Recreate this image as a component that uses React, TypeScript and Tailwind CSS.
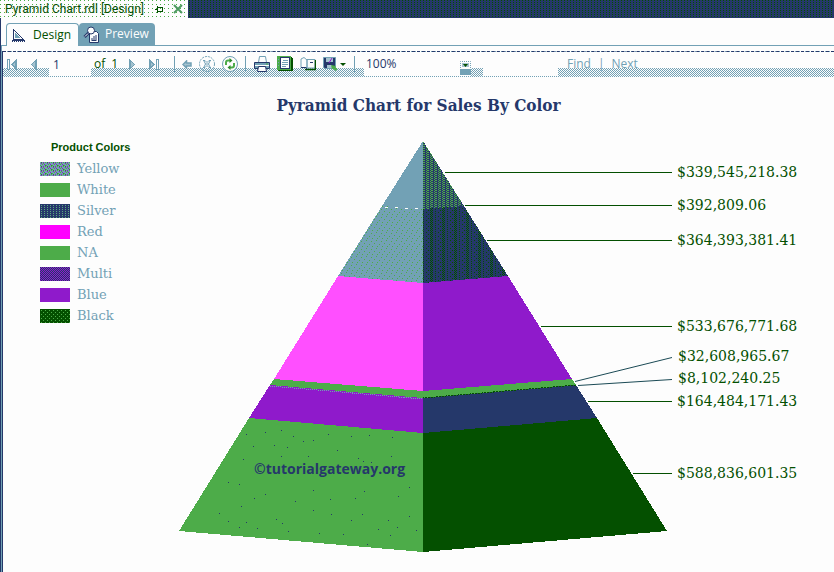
import React from "react";

type LegendEntry = { name: string; fill: string };

const legend: LegendEntry[] = [
  { name: "Yellow", fill: "url(#legendYellow)" },
  { name: "White", fill: "#4dac49" },
  { name: "Silver", fill: "url(#legendSilver)" },
  { name: "Red", fill: "#ff00ff" },
  { name: "NA", fill: "#4dac49" },
  { name: "Multi", fill: "url(#legendMulti)" },
  { name: "Blue", fill: "#8f1acb" },
  { name: "Black", fill: "url(#legendBlack)" },
];

type Callout = { value: string; from: [number, number]; to: number; text: [number, number] };

const callouts: Callout[] = [
  { value: "$339,545,218.38", from: [445, 172], to: 172, text: [677, 177] },
  { value: "$392,809.06", from: [465, 205], to: 205, text: [677, 210] },
  { value: "$364,393,381.41", from: [487, 240], to: 240, text: [677, 245] },
  { value: "$533,676,771.68", from: [541, 326], to: 326, text: [677, 331] },
  { value: "$32,608,965.67", from: [575, 381], to: 357, text: [678, 361] },
  { value: "$8,102,240.25", from: [578, 385], to: 379, text: [678, 383] },
  { value: "$164,484,171.43", from: [588, 401], to: 401, text: [677, 406] },
  { value: "$588,836,601.35", from: [633, 473], to: 473, text: [677, 478] },
];

const specks: [number, number][] = [
  [246, 434], [265, 432], [281, 430], [293, 436], [253, 446], [274, 445], [287, 447], [303, 441],
  [313, 440], [328, 434], [351, 436], [369, 435], [392, 437], [243, 459], [281, 456], [308, 456],
  [337, 450], [358, 458], [363, 461], [371, 462], [391, 456], [228, 482], [239, 484], [254, 498],
  [265, 494], [313, 490], [295, 501], [241, 506], [219, 513], [228, 521], [246, 522], [239, 527],
  [257, 528], [276, 519], [282, 523], [288, 531], [313, 510], [330, 499], [331, 514], [355, 498],
  [364, 491], [351, 520], [362, 514], [398, 496], [409, 487], [388, 520], [409, 516], [397, 527],
  [378, 529], [390, 535], [416, 530], [319, 533], [343, 534], [367, 544],
];

function Separator() {
  return <span className="h-4 w-px bg-[#72a1b5]" />;
}

function ToolButton({ label, children }: { label: string; children: React.ReactNode }) {
  return (
    <button type="button" aria-label={label} className="flex h-6 items-center">
      {children}
    </button>
  );
}

function Tabs() {
  return (
    <div className="flex h-7 items-end border-b border-[#72a1b5] pl-[5px]">
      <button
        type="button"
        className="-mb-px flex h-[23px] w-[73px] items-center gap-2 rounded-t-sm border border-b-0 border-[#72a1b5] bg-[#fdfdfd] pl-[5px] text-[12px] leading-4 text-[#045000]"
      >
        <svg width="13" height="15" viewBox="0 0 13 15" shapeRendering="crispEdges">
          <path d="M1 1v10h10z" fill="#fdfdfd" stroke="#25386a" />
          <path d="M3.5 6v3.5H7z" fill="#72a1b5" stroke="#72a1b5" />
          <path d="M0 12.5h13" stroke="#25386a" />
          <path d="M0 13.5h13" stroke="#25386a" strokeDasharray="1 1" />
        </svg>
        Design
      </button>
      <button
        type="button"
        className="flex h-[22px] w-[76px] items-center gap-[6px] rounded-t-sm bg-[#72a1b5] pl-1 text-[12px] leading-4 text-[#fdfdfd]"
      >
        <svg width="16" height="17" viewBox="0 0 16 17">
          <path d="M6.500 5.500h7l2 2v9h-9z" fill="#fdfdfd" stroke="#25386a" />
          <path d="M9 14v-2M11 14v-4M13 14v-5" stroke="#25386a" />
          <path d="M8.500 14.500h5" stroke="#25386a" />
          <circle cx="8" cy="4.500" r="3.500" fill="#fdfdfd" stroke="#25386a" />
          <path d="M5.500 7L1.500 11" stroke="#25386a" strokeWidth="3" />
          <path d="M5 7.500L2 10.500" stroke="#fdfdfd" />
        </svg>
        Preview
      </button>
    </div>
  );
}

function Toolbar() {
  return (
    <div className="flex h-[26px] items-start border-t border-dashed border-[#25386a] bg-[linear-gradient(#fdfdfd_16px,transparent_16px),conic-gradient(#72a1b5_25%,#fdfdfd_0_50%,#72a1b5_0_75%,#fdfdfd_0)] [background-size:auto,2px_2px] pl-1 text-[12px] text-[#25386a]">
      <div className="flex w-[42px] items-center gap-3">
        <ToolButton label="First page">
          <svg width="11" height="11" viewBox="0 0 11 11" fill="#a5c3d0" stroke="#72a1b5" shapeRendering="crispEdges">
            <path d="M.5.5h2v10h-2z" fill="#fdfdfd" />
            <path d="M9.500 1v9L5 5.500z" />
            <path d="M8.500 3v5" />
          </svg>
        </ToolButton>
        <ToolButton label="Previous page">
          <svg width="8" height="11" viewBox="0 0 8 11" fill="#a5c3d0" stroke="#72a1b5" shapeRendering="crispEdges">
            <path d="M6.500 1v9L1.500 5.500z" />
            <path d="M5.500 3v5" />
          </svg>
        </ToolButton>
      </div>
      <input
        aria-label="Current page"
        defaultValue="1"
        className="h-6 w-[42px] bg-[#fdfdfd] pl-1 text-[12px] outline-none"
      />
      <div className="flex w-[92px] items-center">
        <span className="flex h-6 w-[34px] items-center gap-[6px] pl-[3px] text-[#045000]">
          of <span>1</span>
        </span>
        <div className="ml-[3px] flex gap-3">
          <ToolButton label="Next page">
            <svg width="8" height="11" viewBox="0 0 8 11" fill="#a5c3d0" stroke="#72a1b5" shapeRendering="crispEdges">
              <path d="M1.500 1v9l5-4.500z" />
              <path d="M2.500 3v5" />
            </svg>
          </ToolButton>
          <ToolButton label="Last page">
            <svg width="11" height="11" viewBox="0 0 11 11" fill="#a5c3d0" stroke="#72a1b5" shapeRendering="crispEdges">
              <path d="M8.500.5h2v10h-2z" fill="#fdfdfd" />
              <path d="M1.500 1v9L6 5.500z" />
              <path d="M2.500 3v5" />
            </svg>
          </ToolButton>
        </div>
      </div>
      <div className="-ml-[9px] flex h-6 w-[190px] items-center justify-between pr-[9px]">
        <Separator />
        <ToolButton label="Back">
          <svg width="10" height="9" viewBox="0 0 10 9" fill="#a5c3d0" stroke="#72a1b5" strokeWidth="1.500">
            <path d="M4.500 1L1 4.500 4.500 8V6H9V3H4.500z" />
          </svg>
        </ToolButton>
        <ToolButton label="Stop">
          <svg width="16" height="16" viewBox="0 0 16 16" fill="none" stroke="#72a1b5">
            <circle cx="8" cy="8" r="7.500" strokeDasharray="2 1" />
            <path d="M4 4.500h2l2 2 2-2h2M4 11.500h2l2-2 2 2h2M5 5l1.500 3L5 11M11 5L9.500 8l1.500 3M6.500 8h3" />
          </svg>
        </ToolButton>
        <ToolButton label="Refresh">
          <svg width="16" height="16" viewBox="0 0 16 16">
            <circle cx="8" cy="8" r="7.500" fill="#fdfdfd" stroke="#72a1b5" />
            <path d="M4 9V6.500Q4 4.500 6 4.500h2M12 7v2.500q0 2-2 2H8" fill="none" stroke="#4dac49" strokeWidth="2" />
            <path d="M7.500 2l3 2.500-3 2.500zM8.500 9l-3 2.500 3 2.500z" fill="#2f8a2c" />
          </svg>
        </ToolButton>
        <Separator />
        <ToolButton label="Print">
          <svg width="16" height="16" viewBox="0 0 16 16">
            <path d="M4.500 6.500l1-6h6l1 6z" fill="#fdfdfd" stroke="#72a1b5" />
            <path d="M.5 6.500h15v6H.5z" fill="#72a1b5" stroke="#25386a" />
            <path d="M1 9.500h14" stroke="#fdfdfd" />
            <path d="M4.500 10.500h7l1 5h-9z" fill="#fdfdfd" stroke="#25386a" />
            <path d="M12 8h2" stroke="#4dac49" />
          </svg>
        </ToolButton>
        <ToolButton label="Print layout">
          <svg width="16" height="16" viewBox="0 0 16 16" shapeRendering="crispEdges">
            <path d="M1 1h13l2 2v12H1z" fill="#045000" />
            <path d="M0 0h14v14H0z" fill="#4dac49" />
            <path d="M3.500 1.500h9v11h-9z" fill="#fdfdfd" stroke="#25386a" />
            <path d="M6 4.500h5M5 6.500h6M5 8.500h6M5 10.500h4M1 3.500h1M1 6.500h1M1 9.500h1" stroke="#72a1b5" />
          </svg>
        </ToolButton>
        <ToolButton label="Page setup">
          <svg width="16" height="14" viewBox="0 0 16 14">
            <path d="M1 10.500V2l3-1.500L7 3v7.500zM7 10.500V2.500h8v8.500H7z" fill="#fdfdfd" stroke="#72a1b5" />
            <path d="M5 12.500h10.500V3" fill="none" stroke="#045000" strokeWidth="1.500" />
            <path d="M1 10.500h5l1 2M10 5.500h3" fill="none" stroke="#25386a" />
          </svg>
        </ToolButton>
        <ToolButton label="Export">
          <svg width="24" height="15" viewBox="0 0 24 15">
            <path d="M.5.500h12v11H2l-1.500-1z" fill="#25386a" stroke="#72a1b5" />
            <path d="M3 1h7v4H3zM4 8h5v3H4z" fill="#a5c3d0" />
            <path d="M9 1l-3 5" stroke="#8f1acb" />
            <path d="M8 8l5 1-1 1 2.500 2-2 2L10 11.500 9 12.500z" fill="#4dac49" />
            <path d="M17 6h6l-3 3z" fill="#045000" />
          </svg>
        </ToolButton>
        <Separator />
      </div>
      <div className="relative flex h-6 w-[107px] items-center bg-[#fdfdfd]">
        <select
          aria-label="Zoom"
          defaultValue="100%"
          className="h-6 w-full appearance-none bg-transparent pl-[2px] text-[12px] outline-none"
        >
          <option>100%</option>
        </select>
        <svg className="pointer-events-none absolute top-[9px] right-0" width="11" height="15" viewBox="0 0 11 15">
          <path d="M.5 7V.5h10V7" fill="none" stroke="#72a1b5" strokeDasharray="1 1" />
          <path d="M2 2h7v4H2z" fill="#a5c3d0" />
          <path d="M0 8h11v6H0z" fill="#72a1b5" />
          <path d="M3 3h5L5.500 6z" fill="#045000" />
        </svg>
      </div>
      <input
        aria-label="Search text"
        className="ml-3 h-6 w-[75px] bg-[#fdfdfd] outline-none"
      />
      <div className="flex h-6 items-center pl-[9px] text-[#72a1b5]">
        <button type="button">Find</button>
        <span className="px-[7px]">|</span>
        <button type="button">Next</button>
      </div>
    </div>
  );
}

function Legend() {
  return (
    <section className="w-[171px] shrink-0 pt-[6px] pl-[37px]">
      <h2 className="pl-[11px] font-['Liberation_Sans',Arial,sans-serif] text-[11px] leading-[14px] font-bold text-[#045000]">
        Product Colors
      </h2>
      <ul className="pt-2">
        {legend.map((entry) => (
          <li
            key={entry.name}
            className="flex h-[21px] items-start gap-[7px] font-['DejaVu_Serif',serif] text-[13px] leading-[14px] text-[#72a1b5]"
          >
            <svg width="30" height="14" shapeRendering="crispEdges">
              <rect width="30" height="14" fill={entry.fill} />
            </svg>
            {entry.name}
          </li>
        ))}
      </ul>
    </section>
  );
}

function Pyramid() {
  return (
    <svg viewBox="174 134 660 438" className="h-auto min-w-0 flex-1" role="img" aria-label="Sales by color">
      <defs>
        <pattern id="legendYellow" width="6" height="4" patternUnits="userSpaceOnUse">
          <rect width="6" height="4" fill="#72a1b5" />
          <path d="M1 1h1v1H1zM4 2h1v1H4zM3 0h1v1H3z" fill="#8f1acb" />
          <path d="M2 2h1v1H2zM5 0h1v1H5zM0 3h1v1H0zM3 1h1v1H3z" fill="#4dac49" />
          <path d="M1 0h1v1H1zM5 3h1v1H5z" fill="#2f8a2c" />
        </pattern>
        <pattern id="legendSilver" width="3" height="2" patternUnits="userSpaceOnUse">
          <rect width="3" height="2" fill="#25386a" />
          <rect x="1" y="1" width="1" height="1" fill="#5da680" />
        </pattern>
        <pattern id="legendMulti" width="2" height="2" patternUnits="userSpaceOnUse">
          <rect width="2" height="2" fill="#8f1acb" />
          <path d="M0 0h1v1H0zM1 1h1v1H1z" fill="#25386a" />
        </pattern>
        <pattern id="legendBlack" width="4" height="4" patternUnits="userSpaceOnUse">
          <rect width="4" height="4" fill="#045000" />
          <path d="M1 1h1v1H1zM3 3h1v1H3z" fill="#4dac49" />
        </pattern>
        <pattern id="tipShade" width="4" height="2" patternUnits="userSpaceOnUse">
          <rect width="4" height="2" fill="#25386a" />
          <path d="M0 0h1v1H0zM2 1h1v1H2zM3 0h1v1H3z" fill="#4dac49" />
        </pattern>
        <pattern id="upperLight" width="10" height="8" patternUnits="userSpaceOnUse">
          <rect width="10" height="8" fill="#72a1b5" />
          <path d="M1 1h1v1H1zM6 0h1v1H6zM4 3h1v1H4zM9 4h1v1H9zM2 6h1v1H2zM7 6h1v1H7z" fill="#4dac49" />
        </pattern>
        <pattern id="upperShade" width="12" height="4" patternUnits="userSpaceOnUse">
          <rect width="12" height="4" fill="#25386a" />
          <path
            d="M0 0h1v1H0zM0 2h1v1H0zM3 1h1v1H3zM3 3h1v1H3zM6 0h1v1H6zM8 2h1v1H8zM10 0h1v1H10zM10 2h1v1H10zM11 1h1v1H11zM11 3h1v1H11z"
            fill="#045000"
          />
        </pattern>
      </defs>

      <g shapeRendering="crispEdges">
        <path d="M423 141L382 206l41 3z" fill="#72a1b5" />
        <path d="M423 141l41 65-41 3z" fill="url(#tipShade)" />
        <path d="M382 206l41 3v74l-85-7z" fill="url(#upperLight)" />
        <path d="M464 206l-41 3v74l85-7z" fill="url(#upperShade)" />
        <path d="M385 207l38 2" stroke="#fdfdfd" strokeDasharray="3 7" />
        <path d="M338 276l85 7v109l-149-13z" fill="#ff4fff" />
        <path d="M508 276l-85 7v109l149-13z" fill="#8f1acb" />
        <path d="M274 379l149 12v7l-153-13z" fill="#4dac49" />
        <path d="M572 379l-149 12v7l153-13z" fill="#4dac49" />
        <path d="M270 385l153 13v35l-174-15z" fill="#8f1acb" />
        <path d="M576 385l-153 13v35l174-15z" fill="#25386a" />
        <path d="M270 386l153 13" stroke="#72a1b5" strokeDasharray="1 1" />
        <path d="M576 385l-153 13" stroke="#045000" strokeDasharray="2 1" />
        <path d="M249 418l174 15v119l-244-21z" fill="#4dac49" />
        <path d="M597 418l-174 15v119l244-21z" fill="#045000" />
        {specks.map(([x, y]) => (
          <rect key={`${x}-${y}`} x={x} y={y} width="1" height="1" fill="#25386a" />
        ))}
      </g>

      <text
        x="254"
        y="474"
        fill="#25386a"
        className="font-['Open_Sans',sans-serif] text-[14px] font-bold"
      >
        ©tutorialgateway.org
      </text>

      {callouts.map((c) => {
        const level = c.from[1] === c.to;
        return (
          <g key={c.value}>
            <path
              d={`M${c.from[0]} ${c.from[1]}L672 ${c.to}`}
              transform="translate(0 .5)"
              stroke={level ? "#045000" : "#1b4a55"}
            />
            <text
              x={c.text[0]}
              y={c.text[1]}
              fill="#045000"
              className="font-['DejaVu_Serif',serif] text-[14px]"
            >
              {c.value}
            </text>
          </g>
        );
      })}
    </svg>
  );
}

export default function App() {
  return (
    <div className="min-h-screen bg-[#fdfdfd] font-['Open_Sans',sans-serif]">
      <header className="flex h-[18px] bg-[#25386a] bg-[conic-gradient(from_90deg_at_1px_1px,transparent_50%,#045000_0_75%,transparent_0)] bg-[length:3px_2px]">
        <div className="flex w-[188px] items-center bg-[#fdfdfd] bg-[conic-gradient(from_90deg_at_1px_1px,transparent_50%,#4dac49_0_75%,transparent_0)] bg-[length:4px_4px] pl-[5px] font-[Roboto,sans-serif] text-[12px] leading-[18px] text-[#045000]">
          <span className="w-[150px] whitespace-nowrap">Pyramid Chart.rdl [Design]</span>
          <button type="button" aria-label="Pin tab">
            <svg width="8" height="7" viewBox="0 0 8 7" fill="none" stroke="#045000" shapeRendering="crispEdges">
              <path d="M0 3.500h2M2.500 0v7M3 1.500h4.500v4H3" />
            </svg>
          </button>
          <button type="button" aria-label="Close tab" className="ml-[10px]">
            <svg width="10" height="10" viewBox="0 0 10 10" fill="none" stroke="#4d9a60" strokeWidth="2">
              <path d="M1 1l8 8M9 1L1 9" />
            </svg>
          </button>
        </div>
      </header>
      <div className="min-h-[calc(100vh-18px)] border-l border-[#25386a]">
        <Tabs />
        <div className="min-h-[calc(100vh-51px)] border-l border-[#72a1b5] pt-[5px]">
          <div className="min-h-[calc(100vh-51px)] border-l border-[#25386a]">
            <Toolbar />
            <main>
              <h1 className="pt-4 pb-[17px] text-center font-['DejaVu_Serif_Condensed','DejaVu_Serif',serif] text-[17px] leading-6 font-bold text-[#25386a]">
                Pyramid Chart for Sales By Color
              </h1>
              <div className="flex items-start">
                <Legend />
                <Pyramid />
              </div>
            </main>
          </div>
        </div>
      </div>
    </div>
  );
}
